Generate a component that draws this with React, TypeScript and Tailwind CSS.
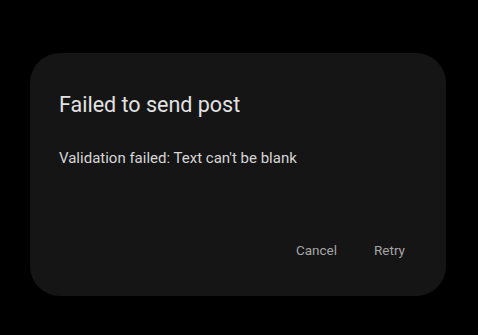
export default function App() {
  return (
    <div
      className="w-[478px] h-[335px] bg-black pt-[53px] pl-[30px]"
      style={{ fontFamily: "Roboto, 'Noto Sans', sans-serif" }}
    >
      <div className="w-[416px] h-[243px] rounded-[30px] bg-[#151515] flex flex-col pl-[29px] pr-[41px]">
        <h2 className="mt-[38px] text-[21.5px] leading-[28px] text-[#e2e2e2]">
          Failed to send post
        </h2>
        <p className="mt-[29px] text-[15px] leading-[20px] text-[#d6d6d6]">
          Validation failed: Text can't be blank
        </p>
        <div className="mt-auto mb-[37px] flex justify-end gap-[37px] text-[13.5px] leading-[18px] text-[#a6a6a6]">
          <button>Cancel</button>
          <button>Retry</button>
        </div>
      </div>
    </div>
  );
}
